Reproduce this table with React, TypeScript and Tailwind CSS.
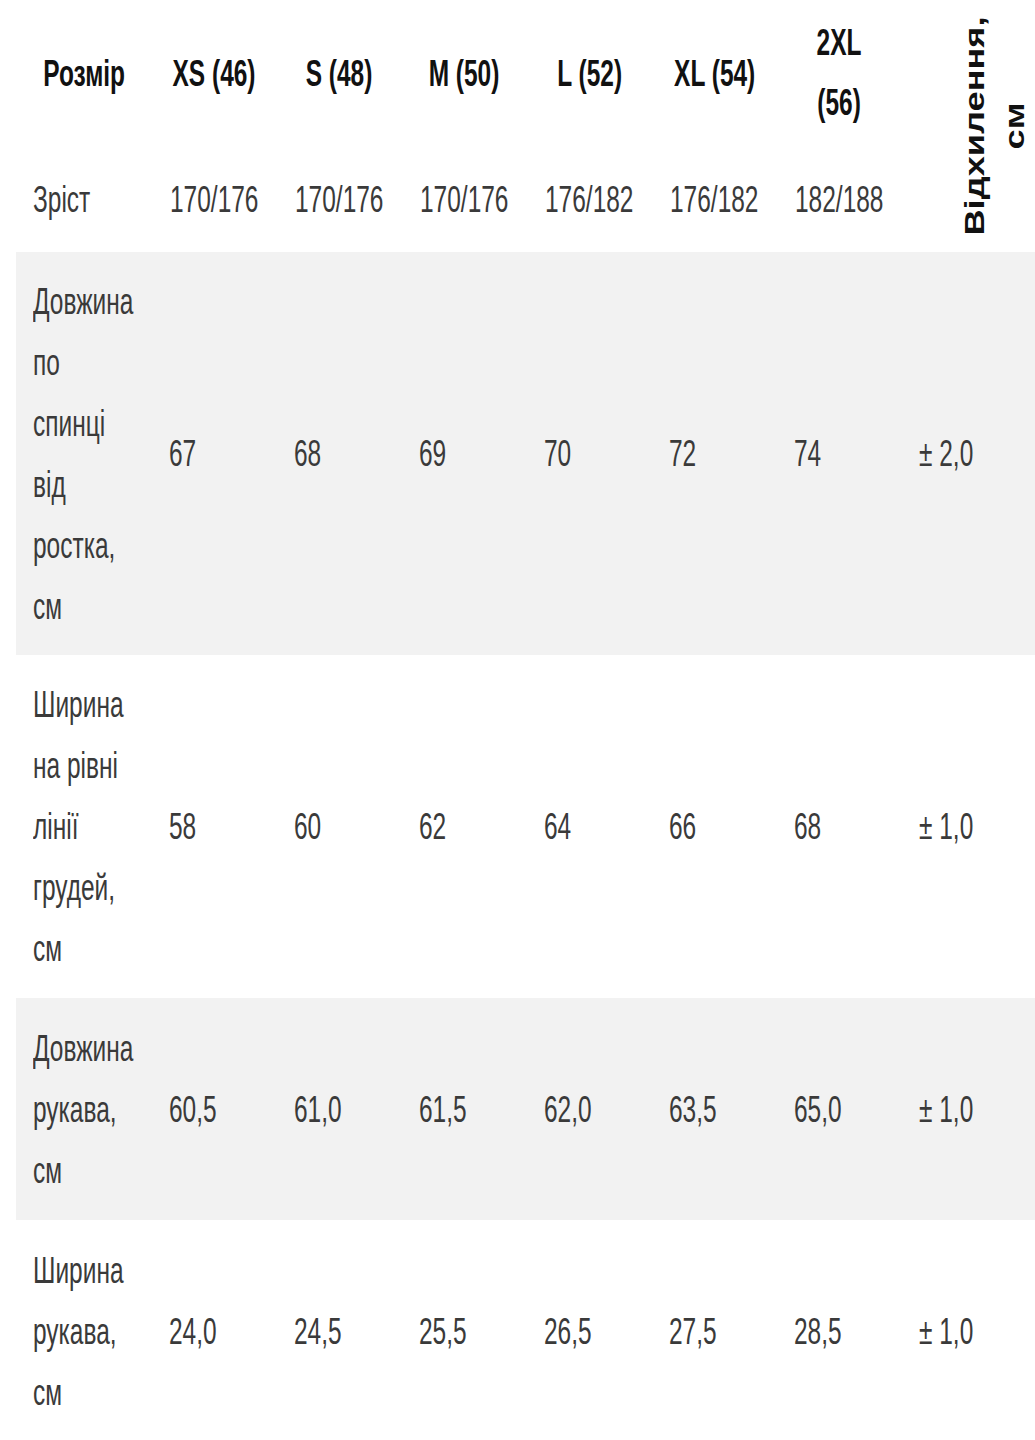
import React from "react";

const sizes = ["XS (46)", "S (48)", "M (50)", "L (52)", "XL (54)"];
const heights = ["170/176", "170/176", "170/176", "176/182", "176/182", "182/188"];

type Row = { label: string[]; values: string[]; tol: string; bg: string; h: string };

const rows: Row[] = [
  {
    label: ["Довжина", "по", "спинці", "від", "ростка,", "см"],
    values: ["67", "68", "69", "70", "72", "74"],
    tol: "± 2,0",
    bg: "bg-[#f2f2f2]",
    h: "h-[403px]",
  },
  {
    label: ["Ширина", "на рівні", "лінії", "грудей,", "см"],
    values: ["58", "60", "62", "64", "66", "68"],
    tol: "± 1,0",
    bg: "bg-white",
    h: "h-[343px]",
  },
  {
    label: ["Довжина", "рукава,", "см"],
    values: ["60,5", "61,0", "61,5", "62,0", "63,5", "65,0"],
    tol: "± 1,0",
    bg: "bg-[#f2f2f2]",
    h: "h-[222px]",
  },
  {
    label: ["Ширина", "рукава,", "см"],
    values: ["24,0", "24,5", "25,5", "26,5", "27,5", "28,5"],
    tol: "± 1,0",
    bg: "bg-white",
    h: "h-[222px]",
  },
];

function T({ children, center }: { children: React.ReactNode; center?: boolean }) {
  return (
    <span
      className={
        "inline-block whitespace-nowrap scale-x-[0.68] " + (center ? "origin-center" : "origin-left")
      }
    >
      {children}
    </span>
  );
}

export default function App() {
  return (
    <div className="min-h-screen bg-white pl-4 font-['Liberation_Sans',Arial,sans-serif] text-[36px] leading-[61px] text-[#3a3a3a]">
      {/* header */}
      <div className="grid grid-cols-[136px_repeat(6,125px)_1fr] grid-rows-[146px_106px]">
        <div className="flex items-center justify-center text-center font-bold text-[#111]">
          <T center>Розмір</T>
        </div>
        {sizes.map((s) => (
          <div key={s} className="flex items-center justify-center text-center font-bold text-[#111]">
            <T center>{s}</T>
          </div>
        ))}
        <div className="flex flex-col items-center justify-center text-center font-bold leading-[60px] text-[#111]">
          <T center>2XL</T>
          <T center>(56)</T>
        </div>
        <div className="row-span-2 flex items-center pl-[53px]">
          <div className="flex h-[252px] w-[80px] items-center justify-center">
            <div className="shrink-0 whitespace-nowrap text-center text-[27px] font-bold leading-[40px] text-[#111] rotate-[-90deg] scale-x-[1.34]">
              <div>Відхилення,</div>
              <div>см</div>
            </div>
          </div>
        </div>
        <div className="flex items-center pl-[17px]">
          <T>Зріст</T>
        </div>
        {heights.map((h, i) => (
          <div key={i} className="flex items-center pl-[18px]">
            <T>{h}</T>
          </div>
        ))}
      </div>

      {/* body rows */}
      {rows.map((r, ri) => (
        <div
          key={ri}
          className={"grid grid-cols-[136px_repeat(6,125px)_1fr] items-center " + r.bg + " " + r.h}
        >
          <div className="flex flex-col pl-[17px]">
            {r.label.map((l, li) => (
              <div key={li}>
                <T>{l}</T>
              </div>
            ))}
          </div>
          {r.values.map((v, vi) => (
            <div key={vi} className="pl-[17px]">
              <T>{v}</T>
            </div>
          ))}
          <div className="pl-[17px]">
            <T>{r.tol}</T>
          </div>
        </div>
      ))}
    </div>
  );
}
